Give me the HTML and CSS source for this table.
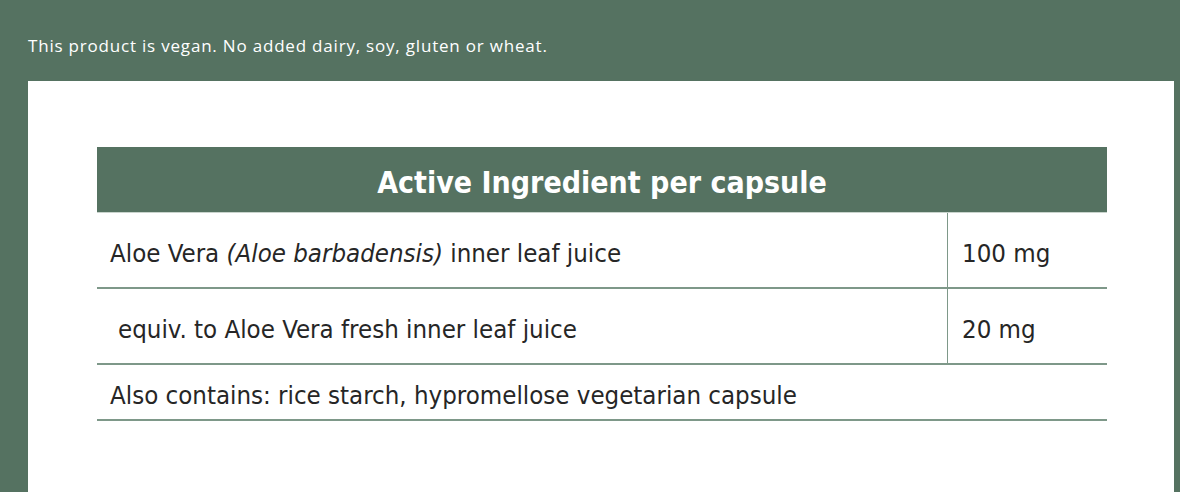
FILE: index.html
```html
<!DOCTYPE html>
<html lang="en">
<head>
    <meta charset="UTF-8">
    <title>Aloe Vera - Ingredients</title>
    <link rel="stylesheet" href="styles.css">
</head>
<body>
    <p class="note">This product is vegan. No added dairy, soy, gluten or wheat.</p>
    <div class="panel">
        <table class="ingredients">
            <thead>
                <tr>
                    <th colspan="2">Active Ingredient per capsule</th>
                </tr>
            </thead>
            <tbody>
                <tr class="row-main">
                    <td class="name">Aloe Vera <em>(Aloe barbadensis)</em> inner leaf juice</td>
                    <td class="amount">100 mg</td>
                </tr>
                <tr class="row-main">
                    <td class="name indent">equiv. to Aloe Vera fresh inner leaf juice</td>
                    <td class="amount">20 mg</td>
                </tr>
                <tr class="row-extra">
                    <td class="name" colspan="2">Also contains: rice starch, hypromellose vegetarian capsule</td>
                </tr>
            </tbody>
        </table>
    </div>
</body>
</html>
```

FILE: styles.css
```css
body {
    margin: 0;
    padding: 0;
    background-color: #557261;
    font-family: 'Open Sans', 'Liberation Sans', sans-serif;
}
.note {
    margin: 0;
    height: 81px;
    padding: 46px 0 0 28px;
    line-height: 0;
    box-sizing: border-box;
    color: #fff;
    font-size: 17px;
    letter-spacing: 0.8px;
    white-space: nowrap;
}
.panel {
    background: #fff;
    margin: 0 6px 0 28px;
    padding: 66px 0 80px 69px;
    height: 411px;
    box-sizing: border-box;
}
.ingredients {
    width: 1010px;
    border-collapse: collapse;
    font-family: 'DejaVu Sans Condensed', 'DejaVu Sans', sans-serif;
    font-stretch: condensed;
    color: #262626;
}
.ingredients th {
    background: #557261;
    color: #fff;
    height: 60px;
    padding: 5px 0 0;
    font-size: 30px;
    font-weight: bold;
    text-align: center;
    border-bottom: 1px solid #c9d4cd;
}
.ingredients td {
    font-size: 25.6px;
    padding: 5px 14px 0 13px;
    border-bottom: 2px solid #7e9889;
}
.row-main td {
    height: 69px;
}
.row-extra td {
    height: 49px;
}
.ingredients .amount {
    width: 131px;
    border-left: 1.5px solid #7e9889;
    padding-left: 14px;
}
.indent {
    padding-left: 21px !important;
}
```
